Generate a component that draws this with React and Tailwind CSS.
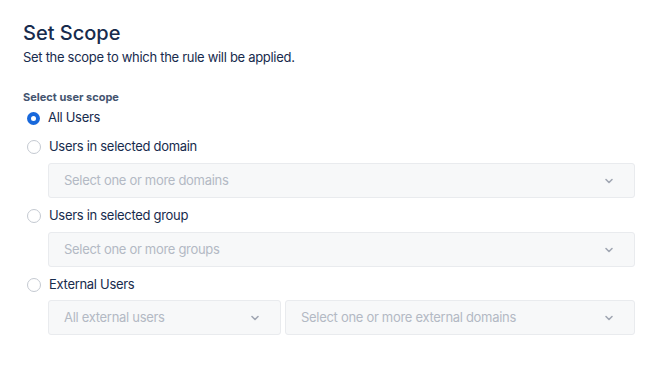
import React from 'react'

const font = { fontFamily: 'Inter, "Noto Sans", sans-serif' }

function Chevron() {
  return (
    <svg viewBox="0 0 10 6" className="h-[6px] w-[10px] text-[#a1a7b3]" fill="none" stroke="currentColor" strokeWidth="1.6" strokeLinecap="round" strokeLinejoin="round" aria-hidden="true">
      <path d="M2 1.5 5 4.5 8 1.5" />
    </svg>
  )
}

function SelectBox({ placeholder, className = '' }) {
  return (
    <div className={`flex h-[35px] items-center justify-between rounded-[3px] border border-[#e9ebee] bg-[#f7f8f9] pl-[15px] pr-[20px] ${className}`}>
      <span className="text-[13px] tracking-[-0.3px] text-[#b3b9c4]">{placeholder}</span>
      <Chevron />
    </div>
  )
}

function Radio({ checked, label, className = '' }) {
  return (
    <label className={`flex h-[20px] items-center ${className}`}>
      {checked ? (
        <span className="ml-[4px] mr-[8px] flex h-[13px] w-[13px] items-center justify-center rounded-full bg-[#1868db]">
          <span className="h-[5px] w-[5px] rounded-full bg-white" />
        </span>
      ) : (
        <span className="ml-[4px] mr-[8px] h-[14px] w-[14px] rounded-full border border-[#c4c9d1] bg-white" />
      )}
      <span className="text-[13px] tracking-[-0.3px] text-[#172b4d]">{label}</span>
    </label>
  )
}

export default function App() {
  const options = [
    { id: 'all', label: 'All Users', checked: true },
    { id: 'domain', label: 'Users in selected domain' },
    { id: 'group', label: 'Users in selected group' },
    { id: 'external', label: 'External Users' }
  ]

  return (
    <div className="min-h-[371px] w-full bg-white pl-[23px] pr-[34px] pt-[21px]" style={font}>
      <h1 className="text-[20px] font-medium leading-[24px] text-[#172b4d]">Set Scope</h1>
      <p className="mt-[2px] text-[13px] leading-[20px] tracking-[-0.3px] text-[#172b4d]">Set the scope to which the rule will be applied.</p>

      <div className="mt-[22px] text-[11px] font-bold leading-[16px] text-[#44546f]">Select user scope</div>

      <Radio checked={options[0].checked} label={options[0].label} className="mt-[3px]" />

      <Radio label={options[1].label} className="mt-[9px]" />
      <div className="ml-[25px] mt-[6px]">
        <SelectBox placeholder="Select one or more domains" />
      </div>

      <Radio label={options[2].label} className="mt-[8px]" />
      <div className="ml-[25px] mt-[6px]">
        <SelectBox placeholder="Select one or more groups" />
      </div>

      <Radio label={options[3].label} className="mt-[8px]" />
      <div className="ml-[25px] mt-[5px] flex gap-[4px]">
        <SelectBox placeholder="All external users" className="w-[233px]" />
        <SelectBox placeholder="Select one or more external domains" className="flex-1" />
      </div>
    </div>
  )
}
